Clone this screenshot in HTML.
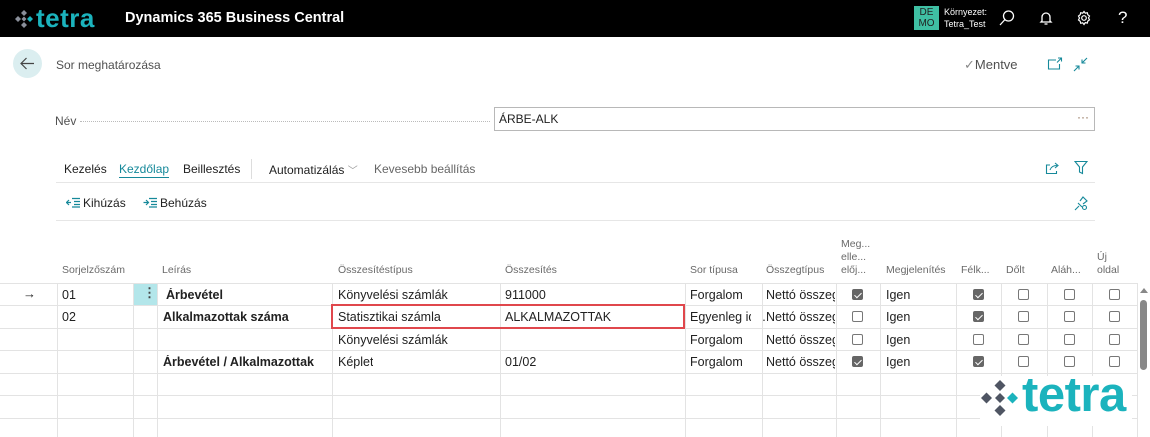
<!DOCTYPE html>
<html><head><meta charset="utf-8"><style>
*{margin:0;padding:0;box-sizing:border-box}
body{width:1150px;height:437px;overflow:hidden;background:#fff;font-family:"Liberation Sans",sans-serif;color:#212121;position:relative;font-size:13px}
.a{position:absolute;white-space:nowrap}
.top{left:0;top:0;width:1150px;height:37px;background:#000}
.hl{color:#6a6a6a;font-size:10.5px}
.cell{position:absolute;font-size:12.5px;white-space:nowrap;overflow:hidden}
.cb{position:absolute;width:11px;height:11px;border:1px solid #777;border-radius:2px;background:#fff}
.cb.on{background:#666;border-color:#666}
.cb.on:after{content:"";position:absolute;left:3px;top:1px;width:3px;height:6px;border:solid #fff;border-width:0 1.5px 1.5px 0;transform:rotate(45deg)}
.hline{position:absolute;left:0;width:1137px;height:1px;background:#e3e3e3}
.vline{position:absolute;top:283px;height:154px;width:1px;background:#e3e3e3}
</style></head><body>
<div class="a top"></div>
<svg class="a" style="left:14px;top:9px" width="20" height="20" viewBox="0 0 20 20"><g fill="#8a8f9a"><path d="M10 1l3 3-3 3-3-3z"/><path d="M10 13l3 3-3 3-3-3z"/><path d="M1 10l3-3 3 3-3 3z"/><path d="M10 7.5l2.5 2.5-2.5 2.5-2.5-2.5z"/></g><path d="M13 10l3-3 3 3-3 3z" fill="#1bb3bd"/></svg>
<div class="a" style="left:36px;top:3px;font-size:26px;font-weight:bold;color:#1bb3bd;letter-spacing:0.5px">tetra</div>
<div class="a" style="left:125px;top:10px;font-size:14.5px;font-weight:bold;color:#fff">Dynamics 365 Business Central</div>
<div class="a" style="left:914px;top:6px;width:25px;height:24px;background:#3fbfa3;color:#222;font-size:10px;line-height:11px;text-align:center;padding-top:1px">DE<br>MO</div>
<div class="a" style="left:944px;top:6px;font-size:9px;color:#fff;line-height:12px">Környezet:<br>Tetra_Test</div>
<svg class="a" style="left:998px;top:9px" width="18" height="18" viewBox="0 0 18 18" fill="none" stroke="#fff" stroke-width="1.3"><circle cx="10.5" cy="7" r="5"/><path d="M7 10.5L2 16"/></svg>
<svg class="a" style="left:1038px;top:10px" width="16" height="16" viewBox="0 0 16 16" fill="none" stroke="#fff" stroke-width="1.3"><path d="M4 11V7a4 4 0 018 0v4l1 1H3z"/><path d="M6.5 14h3"/></svg>
<svg class="a" style="left:1076px;top:10px" width="16" height="16" viewBox="0 0 16 16" fill="none" stroke="#fff" stroke-width="1.2"><circle cx="8" cy="8" r="2.3"/><path d="M8 1.5l1.3 1.7 2-.5.5 2 1.7 1.3-1 1.9 1 1.9-1.7 1.3-.5 2-2-.5L8 14.5l-1.3-1.7-2 .5-.5-2L2.5 10l1-2-1-2 1.7-1.3.5-2 2 .5z"/></svg>
<div class="a" style="left:1118px;top:8px;font-size:17px;color:#fff">?</div>

<div class="a" style="left:13px;top:49px;width:29px;height:29px;border-radius:50%;background:#dbeef0"></div>
<svg class="a" style="left:19px;top:55px" width="17" height="17" viewBox="0 0 17 17" fill="none" stroke="#444" stroke-width="1.2"><path d="M15 8.5H2M7.5 3L2 8.5 7.5 14"/></svg>
<div class="a" style="left:56px;top:58px;font-size:12px;color:#505050">Sor meghatározása</div>
<div class="a" style="left:964px;top:57px;font-size:13px;color:#505050"><span style="color:#888">✓</span>Mentve</div>
<svg class="a" style="left:1047px;top:57px" width="16" height="14" viewBox="0 0 16 14" fill="none" stroke="#16899a" stroke-width="1.1"><path d="M9 3H1.5v9h11V7"/><path d="M11 1h3.5v3.5M14.5 1L10 5.5"/></svg>
<svg class="a" style="left:1073px;top:57px" width="15" height="15" viewBox="0 0 15 15" fill="none" stroke="#16899a" stroke-width="1.1"><path d="M1 14l5-5M2.5 9H6v3.5M14 1L9 6M9 2.5V6h3.5"/></svg>

<div class="a" style="left:55px;top:114px;font-size:12px;color:#505050">Név</div>
<div class="a" style="left:80px;top:121px;width:410px;border-top:1px dotted #bbb"></div>
<div class="a" style="left:494px;top:107px;width:601px;height:24px;border:1px solid #b8b8b8"></div>
<div class="a" style="left:499px;top:112px;font-size:12px">ÁRBE-ALK</div>
<div class="a" style="left:1077px;top:110px;font-size:12px;color:#8a6a50">···</div>

<div class="a" style="left:64px;top:162px;font-size:12px">Kezelés</div>
<div class="a" style="left:119px;top:162px;font-size:12px;color:#16899a;border-bottom:1.5px solid #16899a;padding-bottom:1px">Kezdőlap</div>
<div class="a" style="left:183px;top:162px;font-size:12px">Beillesztés</div>
<div class="a" style="left:251px;top:159px;width:1px;height:20px;background:#ddd"></div>
<div class="a" style="left:269px;top:162px;font-size:12px">Automatizálás <span style="color:#999;font-size:10px">﹀</span></div>
<div class="a" style="left:374px;top:162px;font-size:12px;color:#666">Kevesebb beállítás</div>
<svg class="a" style="left:1045px;top:161px" width="15" height="14" viewBox="0 0 15 14" fill="none" stroke="#16899a" stroke-width="1.1"><path d="M5 4H1.5v8.5h10V10"/><path d="M5 9c1-3 3-4.5 7-4.5M10 2l3 2.5-3 2.5"/></svg>
<svg class="a" style="left:1074px;top:160px" width="14" height="15" viewBox="0 0 14 15" fill="none" stroke="#16899a" stroke-width="1.1"><path d="M1 1.5h12L8.5 7v6.5l-3-1.5V7z"/></svg>
<div class="a" style="left:56px;top:182px;width:1039px;height:1px;background:#e6e6e6"></div>
<svg class="a" style="left:66px;top:197px" width="14" height="11" viewBox="0 0 14 11" fill="none" stroke="#16899a" stroke-width="1.2"><path d="M6 1.5h8M8 4.5h6M8 7.5h6M6 10h8M5 5.5H0.5M3 3L0.5 5.5 3 8"/></svg>
<div class="a" style="left:83px;top:196px;font-size:12px">Kihúzás</div>
<svg class="a" style="left:143px;top:197px" width="14" height="11" viewBox="0 0 14 11" fill="none" stroke="#16899a" stroke-width="1.2"><path d="M6 1.5h8M8 4.5h6M8 7.5h6M6 10h8M0.5 5.5H5M3 3l2.5 2.5L3 8"/></svg>
<div class="a" style="left:160px;top:196px;font-size:12px">Behúzás</div>
<svg class="a" style="left:1074px;top:196px" width="14" height="15" viewBox="0 0 14 15" fill="none" stroke="#16899a" stroke-width="1.1"><path d="M1 14l4-4M4 7l4 4M6 5l3-4 4 4-4 3"/><circle cx="10.5" cy="11.5" r="2"/></svg>
<div class="a" style="left:56px;top:220px;width:1039px;height:1px;background:#e6e6e6"></div>

<div class="a hl" style="left:62px;top:264px">Sorjelzőszám</div>
<div class="a hl" style="left:162px;top:264px">Leírás</div>
<div class="a hl" style="left:338px;top:264px">Összesítéstípus</div>
<div class="a hl" style="left:505px;top:264px">Összesítés</div>
<div class="a hl" style="left:690px;top:264px">Sor típusa</div>
<div class="a hl" style="left:766px;top:264px">Összegtípus</div>
<div class="a hl" style="left:841px;top:238px;line-height:13px">Meg...<br>elle...<br>előj...</div>
<div class="a hl" style="left:886px;top:264px">Megjelenítés</div>
<div class="a hl" style="left:961px;top:264px">Félk...</div>
<div class="a hl" style="left:1006px;top:264px">Dőlt</div>
<div class="a hl" style="left:1051px;top:264px">Aláh...</div>
<div class="a hl" style="left:1097px;top:251px;line-height:13px">Új<br>oldal</div>

<div class="hline" style="top:283px"></div><div class="hline" style="top:305px"></div><div class="hline" style="top:328px"></div><div class="hline" style="top:350px"></div><div class="hline" style="top:373px"></div><div class="hline" style="top:395px"></div><div class="hline" style="top:418px"></div>
<div class="vline" style="left:57px"></div><div class="vline" style="left:133px"></div><div class="vline" style="left:157px"></div><div class="vline" style="left:332px"></div><div class="vline" style="left:500px"></div><div class="vline" style="left:685px"></div><div class="vline" style="left:762px"></div><div class="vline" style="left:836px"></div><div class="vline" style="left:880px"></div><div class="vline" style="left:956px"></div><div class="vline" style="left:1001px"></div><div class="vline" style="left:1047px"></div><div class="vline" style="left:1092px"></div><div class="vline" style="left:1137px"></div>

<div class="a" style="left:134px;top:284px;width:23px;height:21px;background:#b3e6ea"></div>
<div class="a" style="left:143px;top:285px;font-size:13px;color:#444;font-weight:bold">⋮</div>
<div class="a" style="left:23px;top:286px;font-size:13px">→</div>

<div class="cell" style="left:62px;top:288px">01</div>
<div class="cell" style="left:166px;top:288px;font-weight:bold">Árbevétel</div>
<div class="cell" style="left:338px;top:288px">Könyvelési számlák</div>
<div class="cell" style="left:505px;top:288px">911000</div>
<div class="cell" style="left:690px;top:288px">Forgalom</div>
<div class="cell" style="left:766px;top:288px;width:69px">Nettó összeg</div>
<div class="cell" style="left:886px;top:288px">Igen</div>

<div class="cell" style="left:62px;top:310px">02</div>
<div class="cell" style="left:163px;top:310px;font-weight:bold">Alkalmazottak száma</div>
<div class="cell" style="left:338px;top:310px">Statisztikai számla</div>
<div class="cell" style="left:505px;top:310px">ALKALMAZOTTAK</div>
<div class="cell" style="left:690px;top:310px">Egyenleg id...</div>
<div class="a" style="left:751px;top:306px;width:11px;height:21px;background:#fff"></div>
<div class="cell" style="left:766px;top:310px;width:69px">Nettó összeg</div>
<div class="cell" style="left:886px;top:310px">Igen</div>

<div class="cell" style="left:338px;top:333px">Könyvelési számlák</div>
<div class="cell" style="left:690px;top:333px">Forgalom</div>
<div class="cell" style="left:766px;top:333px;width:69px">Nettó összeg</div>
<div class="cell" style="left:886px;top:333px">Igen</div>

<div class="cell" style="left:163px;top:355px;font-weight:bold">Árbevétel / Alkalmazottak</div>
<div class="cell" style="left:338px;top:355px">Képlet</div>
<div class="cell" style="left:505px;top:355px">01/02</div>
<div class="cell" style="left:690px;top:355px">Forgalom</div>
<div class="cell" style="left:766px;top:355px;width:69px">Nettó összeg</div>
<div class="cell" style="left:886px;top:355px">Igen</div>

<div class="a" style="left:331px;top:304px;width:354px;height:25px;border:2px solid #e0474c"></div>

<div class="cb on" style="left:852px;top:289px"></div><div class="cb on" style="left:973px;top:289px"></div><div class="cb" style="left:1018px;top:289px"></div><div class="cb" style="left:1064px;top:289px"></div><div class="cb" style="left:1109px;top:289px"></div>
<div class="cb" style="left:852px;top:311px"></div><div class="cb on" style="left:973px;top:311px"></div><div class="cb" style="left:1018px;top:311px"></div><div class="cb" style="left:1064px;top:311px"></div><div class="cb" style="left:1109px;top:311px"></div>
<div class="cb" style="left:852px;top:334px"></div><div class="cb" style="left:973px;top:334px"></div><div class="cb" style="left:1018px;top:334px"></div><div class="cb" style="left:1064px;top:334px"></div><div class="cb" style="left:1109px;top:334px"></div>
<div class="cb on" style="left:852px;top:356px"></div><div class="cb on" style="left:973px;top:356px"></div><div class="cb" style="left:1018px;top:356px"></div><div class="cb" style="left:1064px;top:356px"></div><div class="cb" style="left:1109px;top:356px"></div>

<div class="a" style="left:1140px;top:288px;width:0;height:0;border-left:4px solid transparent;border-right:4px solid transparent;border-bottom:5px solid #888"></div>
<div class="a" style="left:1140px;top:300px;width:7px;height:70px;border-radius:4px;background:#888"></div>

<div class="a" style="left:980px;top:376px;width:152px;height:50px;background:#fff"></div>
<svg class="a" style="left:980px;top:378px" width="40" height="40" viewBox="0 0 40 40"><g fill="#4f5563"><path d="M20 2l5.5 5.5L20 13l-5.5-5.5z"/><path d="M20 27l5.5 5.5L20 38l-5.5-5.5z"/><path d="M1 20l5.5-5.5L12 20l-5.5 5.5z"/><path d="M20 15l5 5-5 5-5-5z"/></g><path d="M27 20l5.5-5.5L38 20l-5.5 5.5z" fill="#1bb3bd"/></svg>
<div class="a" style="left:1022px;top:368px;font-size:49px;font-weight:bold;color:#1bb3bd;line-height:54px;letter-spacing:-0.5px">tetra</div>
</body></html>
